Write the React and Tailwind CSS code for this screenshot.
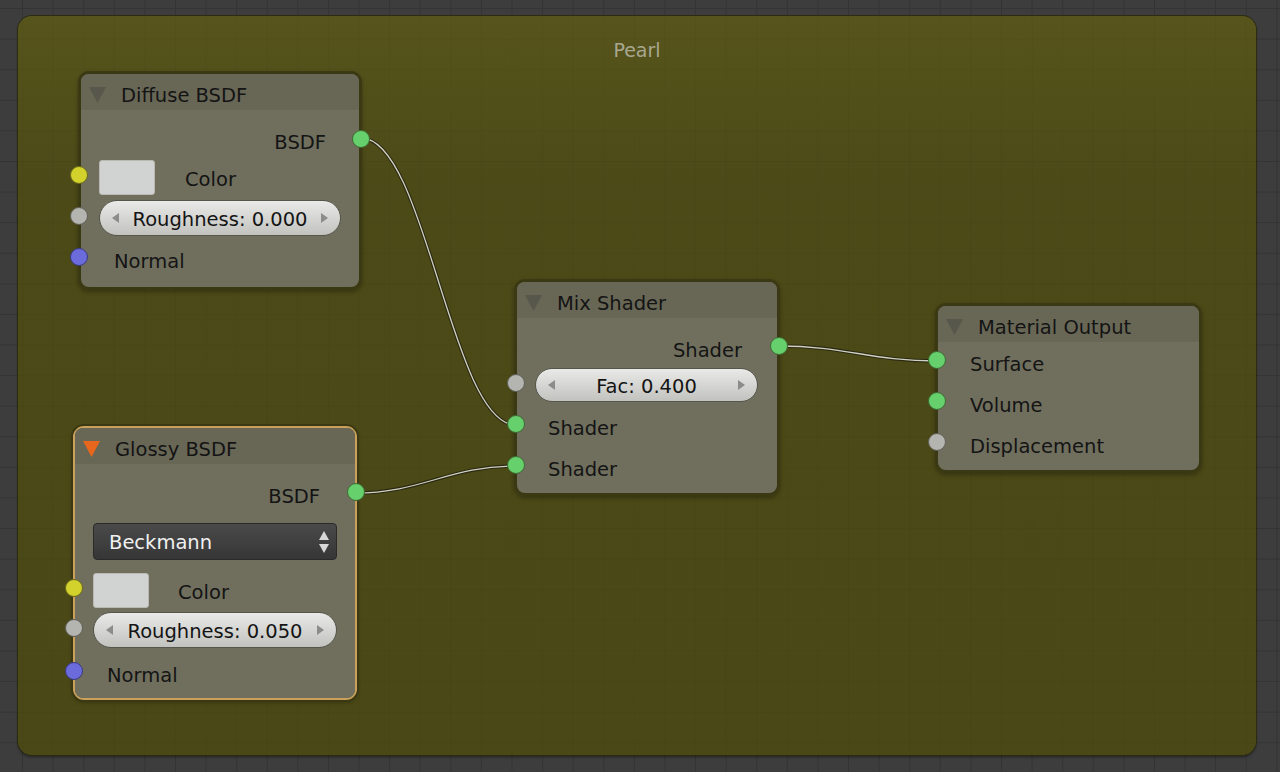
import React from 'react';

const SOCKETS = {
  green: 'bg-[#66d06c] border-[#3e6a34]',
  yellow: 'bg-[#d3d22d] border-[#6b6a1c]',
  grey: 'bg-[#b4b4b0] border-[#5f5f58]',
  blue: 'bg-[#6b6bdc] border-[#3a3a82]',
};

const Socket = ({ color, pos }) => (
  <span
    className={`absolute top-[calc(50%-11px)] z-10 h-[18px] w-[18px] rounded-full border ${SOCKETS[color]} ${pos}`}
  />
);

// one socket line inside a node
const Row = ({ className = '', inSocket, outSocket, inPos = '-left-[11px]', outPos = '-right-[11px]', children }) => (
  <div className={`relative flex items-center ${className}`}>
    {inSocket && <Socket color={inSocket} pos={inPos} />}
    {children}
    {outSocket && <Socket color={outSocket} pos={outPos} />}
  </div>
);

const Label = ({ className = '', children }) => <span className={`pt-[5px] ${className}`}>{children}</span>;

const Triangle = ({ selected }) => (
  <svg width="17" height="16" viewBox="0 0 17 16" className="shrink-0">
    <polygon points="0,0 17,0 8.5,16" fill={selected ? '#e8671c' : '#57574b'} />
  </svg>
);

const Node = ({ className, title, selected, children }) => (
  <div
    className={`absolute rounded-[11px] ${
      selected
        ? 'border-2 border-[#caa05a] shadow-[0_0_0_2px_#3a3913,0_2px_4px_rgba(0,0,0,0.35)]'
        : 'border-[3px] border-[#3a3913] shadow-[0_2px_4px_rgba(0,0,0,0.3)]'
    } ${className}`}
  >
    <div className="rounded-[8px] bg-[#706f5e]">
      <div className="flex h-[36px] items-center gap-[15px] rounded-t-[8px] bg-[#686756] pl-[8px] pt-[5px]">
        <Triangle selected={selected} />
        <span className="pt-[2px]">{title}</span>
      </div>
      {children}
    </div>
  </div>
);

const Arrow = ({ dir }) => (
  <svg width="7" height="10" viewBox="0 0 7 10" className="shrink-0">
    <polygon points={dir === 'left' ? '7,0 7,10 0,5' : '0,0 0,10 7,5'} fill="#8c8c88" />
  </svg>
);

const Slider = ({ label }) => (
  <div className="flex h-full w-full items-center justify-between rounded-full border border-[#56564c] bg-[linear-gradient(to_bottom,#e9e9e7,#c2c2bf)] px-[12px]">
    <Arrow dir="left" />
    <span className="pt-[4px]">{label}</span>
    <Arrow dir="right" />
  </div>
);

const Swatch = () => (
  <div className="h-[35px] w-[56px] rounded-[3px] border border-[#b9b9b1] bg-[#d1d2d2]" />
);

const Link = ({ d }) => (
  <g>
    <path d={d} fill="none" stroke="#2b2a10" strokeWidth="3.5" />
    <path d={d} fill="none" stroke="#cfcfc4" strokeWidth="1.3" />
  </g>
);

const App = () => {
  return (
    <div className="relative h-[772px] w-[1280px] overflow-hidden bg-[#3d3d3d] bg-[linear-gradient(to_right,#343434_1px,transparent_1px),linear-gradient(to_bottom,#343434_1px,transparent_1px)] bg-[size:30.6px_30.6px] bg-[position:22px_8px] font-['DejaVu_Sans',sans-serif] text-[19.5px] text-[#141414]">
      {/* Frame */}
      <div className="absolute left-[18px] top-[16px] h-[739px] w-[1238px] rounded-[14px] bg-[linear-gradient(to_right,rgba(0,0,0,0.035)_1px,transparent_1px),linear-gradient(to_bottom,rgba(0,0,0,0.035)_1px,transparent_1px),linear-gradient(to_bottom,#57551c,#4c4a17_22%,#4a4816)] bg-[size:30.6px_30.6px,30.6px_30.6px,100%_100%] bg-[position:4px_-8px,4px_-8px,0_0] shadow-[0_0_0_1px_#2d2c10,0_2px_3px_rgba(0,0,0,0.45)]">
        <div className="pt-[20px] text-center text-[19px] text-[#a8a78f]">Pearl</div>
      </div>

      {/* Links */}
      <svg className="absolute left-0 top-0" width="1280" height="772">
        <Link d="M361 138 C426 138 451 425 516 425" />
        <Link d="M355 493 C422 493 449 466 516 466" />
        <Link d="M779 346 C845 346 871 361 937 361" />
      </svg>

      {/* Diffuse BSDF */}
      <Node className="left-[78px] top-[71px] w-[284px]" title="Diffuse BSDF">
        <div className="pb-[10px] pt-[12px]">
          <Row className="h-[37px] justify-end pr-[33px]" outSocket="green"><Label>BSDF</Label></Row>
          <Row className="h-[36px] pl-[18px]" inSocket="yellow">
            <Swatch />
            <Label className="ml-[30px]">Color</Label>
          </Row>
          <Row className="mt-[5px] h-[36px] px-[18px]" inSocket="grey">
            <Slider label="Roughness: 0.000" />
          </Row>
          <Row className="mt-[5px] h-[36px] pl-[33px]" inSocket="blue"><Label>Normal</Label></Row>
        </div>
      </Node>

      {/* Glossy BSDF */}
      <Node className="left-[73px] top-[426px] w-[284px]" title="Glossy BSDF" selected>
        <div className="pb-[7px] pt-[12px]">
          <Row className="h-[36px] justify-end pr-[35px]" outSocket="green" outPos="-right-[10px]"><Label>BSDF</Label></Row>
          <div className="mx-[18px] mt-[11px] flex h-[37px] items-center justify-between rounded-[4px] border border-[#2a2a2a] bg-[linear-gradient(to_bottom,#4a4a4a,#363636)] pl-[15px] pr-[7px] text-[#f0f0f0]">
            <span className="pt-[3px]">Beckmann</span>
            <svg width="10" height="22" viewBox="0 0 10 22">
              <polygon points="5,0 10,9 0,9" fill="#d8d8d8" />
              <polygon points="0,13 10,13 5,22" fill="#d8d8d8" />
            </svg>
          </div>
          <Row className="mt-[12px] h-[36px] pl-[18px]" inSocket="yellow" inPos="-left-[10px]">
            <Swatch />
            <Label className="ml-[29px]">Color</Label>
          </Row>
          <Row className="mt-[4px] h-[36px] px-[18px]" inSocket="grey" inPos="-left-[10px]">
            <Slider label="Roughness: 0.050" />
          </Row>
          <Row className="mt-[7px] h-[36px] pl-[32px]" inSocket="blue" inPos="-left-[10px]"><Label>Normal</Label></Row>
        </div>
      </Node>

      {/* Mix Shader */}
      <Node className="left-[514px] top-[279px] w-[266px]" title="Mix Shader">
        <div className="pb-[8px] pt-[12px]">
          <Row className="h-[36px] justify-end pr-[35px]" outSocket="green"><Label>Shader</Label></Row>
          <Row className="mt-[2px] h-[34px] pl-[18px] pr-[19px]" inSocket="grey" inPos="-left-[10px]">
            <Slider label="Fac: 0.400" />
          </Row>
          <Row className="mt-[6px] h-[36px] pl-[31px]" inSocket="green" inPos="-left-[10px]"><Label>Shader</Label></Row>
          <Row className="mt-[5px] h-[36px] pl-[31px]" inSocket="green" inPos="-left-[10px]"><Label>Shader</Label></Row>
        </div>
      </Node>

      {/* Material Output */}
      <Node className="left-[935px] top-[303px] w-[267px]" title="Material Output">
        <div className="pb-[8px] pt-[2px]">
          <Row className="h-[36px] pl-[32px]" inSocket="green" inPos="-left-[10px]"><Label>Surface</Label></Row>
          <Row className="mt-[5px] h-[36px] pl-[32px]" inSocket="green" inPos="-left-[10px]"><Label>Volume</Label></Row>
          <Row className="mt-[5px] h-[36px] pl-[32px]" inSocket="grey" inPos="-left-[10px]"><Label>Displacement</Label></Row>
        </div>
      </Node>
    </div>
  );
};

export default App;
